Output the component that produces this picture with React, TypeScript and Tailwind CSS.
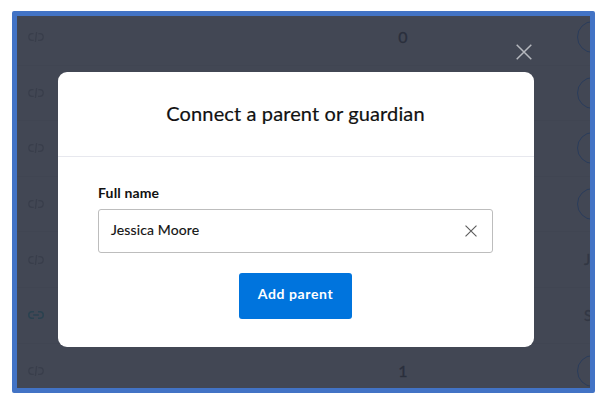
type Row = { linked?: boolean; count?: string; name?: string };

const rows: Row[] = [
  { count: '0' },
  {},
  {},
  {},
  { name: 'J' },
  { linked: true, name: 'S' },
  { count: '1' },
];

function LinkIcon({ linked }: { linked?: boolean }) {
  return (
    <svg
      width="16"
      height="10"
      viewBox="0 0 16 10"
      fill="none"
      strokeWidth={linked ? 1.6 : 1.2}
      className={linked ? 'stroke-[#2b4250]' : 'stroke-[#393e4b]'}
    >
      {linked ? (
        <path d="M6 1.7H4.1a3.3 3.3 0 0 0 0 6.6H6M10 1.7h1.9a3.3 3.3 0 0 1 0 6.6H10M5.2 5h5.6" />
      ) : (
        <path d="M5.4 1.7H4.1a3.3 3.3 0 0 0 0 6.6h1.6M10.4 1.7h1.5a3.3 3.3 0 0 1 0 6.6h-1.8M8.6 0L7.4 10" />
      )}
    </svg>
  );
}

function CloseIcon({ size, className }: { size: number; className: string }) {
  return (
    <svg width={size} height={size} viewBox="0 0 16 16" fill="none" className={className}>
      <path d="M0.7 0.7L15.3 15.3M15.3 0.7L0.7 15.3" />
    </svg>
  );
}

function StudentRow({ linked, count, name }: Row) {
  return (
    <div className="grid h-[55.6px] w-[573px] shrink-0 grid-cols-[376px_184px_13px] items-center border-b border-[#404552]">
      <div className="pl-[11px]">
        <LinkIcon linked={linked} />
      </div>
      <div className="w-[20px] text-center text-[16px] leading-5 text-[#2a2f3c] [-webkit-text-stroke:0.3px_#2a2f3c]">
        {count}
      </div>
      {name ? (
        <div className="flex h-[31px] items-center pl-[7px] text-[15px] text-[#323744] [-webkit-text-stroke:0.3px_#323744]">
          {name}
        </div>
      ) : (
        <div className="h-[32px] w-[32px] rounded-full border border-[#2a3c5b]" />
      )}
    </div>
  );
}

export default function App() {
  return (
    <div className="h-[408px] w-[604px] overflow-hidden bg-white pl-3 pt-[11px] font-['Lato',sans-serif]">
      <div className="relative h-[382px] w-[583px] overflow-hidden rounded-[2px] border-5 border-[#4273c5] bg-[#424754]">
        <div className="-mt-[6px] flex flex-col">
          {rows.map((row, i) => (
            <StudentRow key={i} {...row} />
          ))}
        </div>

        <button aria-label="Close dialog" className="absolute left-[498.5px] top-[28px]">
          <CloseIcon size={16} className="stroke-[#b5b8be] stroke-[1.5]" />
        </button>

        <section
          role="dialog"
          className="absolute left-[40.5px] top-[56.4px] flex h-[275px] w-[476px] flex-col rounded-[9px] bg-white text-[#111]"
        >
          <header className="flex h-[84.6px] shrink-0 items-center justify-center border-b border-[#e7e8ee]">
            <h1 className="whitespace-nowrap pb-[2px] text-[20px] leading-6 tracking-[0.12px] [-webkit-text-stroke:0.2px_#111]">
              Connect a parent or guardian
            </h1>
          </header>
          <div className="flex flex-col px-[40.5px] pt-[26px]">
            <label className="text-[14px] font-bold leading-5 tracking-[0.15px]">Full name</label>
            <div className="mt-[6px] flex h-[44px] items-center justify-between rounded-[3px] border border-[#bdbdbd] pl-3 pr-[15px]">
              <span className="pb-[2px] text-[14px] tracking-[0.12px] [-webkit-text-stroke:0.15px_#111]">Jessica Moore</span>
              <CloseIcon size={12} className="stroke-[#5c5c5c] stroke-[1.5]" />
            </div>
            <button className="mt-5 flex h-[46px] w-[113px] items-center justify-center self-center rounded-[3px] bg-[#0074dd] pb-[4px] text-[14px] font-bold tracking-[0.6px] text-white">
              Add parent
            </button>
          </div>
        </section>
      </div>
    </div>
  );
}
